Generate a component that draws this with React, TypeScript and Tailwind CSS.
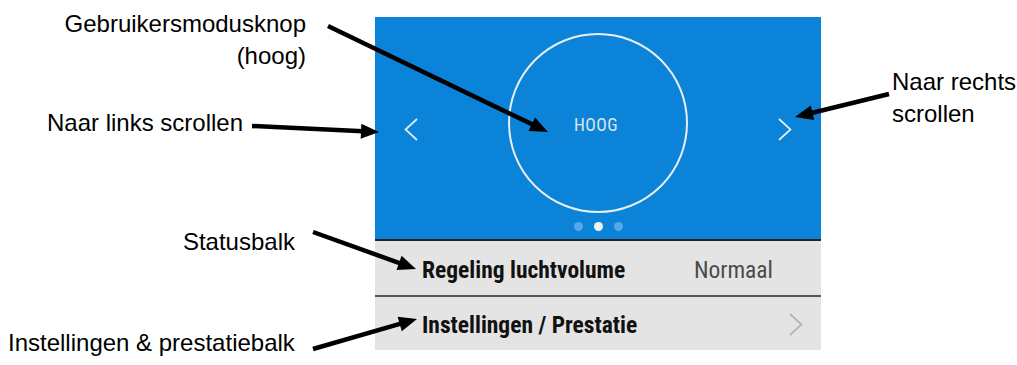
import React from 'react';

type ArrowProps = { x1: number; y1: number; x2: number; y2: number; hl?: number; hw?: number };

function Arrow({ x1, y1, x2, y2, hl = 18, hw = 15 }: ArrowProps) {
  const len = Math.hypot(x2 - x1, y2 - y1);
  const ux = (x2 - x1) / len;
  const uy = (y2 - y1) / len;
  const bx = x2 - ux * hl;
  const by = y2 - uy * hl;
  const px = -uy * (hw / 2);
  const py = ux * (hw / 2);
  return (
    <g>
      <line x1={x1} y1={y1} x2={bx + ux * 2} y2={by + uy * 2} stroke="#000" strokeWidth={4.5} />
      <polygon points={`${x2},${y2} ${bx + px},${by + py} ${bx - px},${by - py}`} fill="#000" />
    </g>
  );
}

function Chevron({ dir, className }: { dir: 'left' | 'right'; className?: string }) {
  return (
    <svg width="14" height="23" viewBox="0 0 14 23" className={className}>
      <path
        d={dir === 'left' ? 'M13 1 L1.5 11.5 L13 22' : 'M1 1 L12.5 11.5 L1 22'}
        fill="none"
        stroke="currentColor"
        strokeWidth="1.7"
      />
    </svg>
  );
}

const cond = "font-['Roboto_Condensed','Liberation_Sans_Narrow',Roboto,sans-serif] [font-stretch:condensed]";

export default function App() {
  return (
    <div className="relative flex w-[1017px] h-[365px] overflow-hidden bg-white text-black font-['Liberation_Sans',Arial,sans-serif] text-[24px] leading-[32px]">
      {/* left labels */}
      <div className="flex w-[375px] shrink-0 flex-col">
        <div className="mt-[8px] pr-[69px] text-right">
          <div>Gebruikersmodusknop</div>
          <div>(hoog)</div>
        </div>
        <div className="mt-[35px] pl-[47px]">Naar links scrollen</div>
        <div className="mt-[87px] pr-[80px] text-right">Statusbalk</div>
        <div className="mt-[69px] pl-[8px] whitespace-nowrap">Instellingen &amp; prestatiebalk</div>
      </div>

      {/* device screen */}
      <div className="flex w-[446px] shrink-0 flex-col pt-[17px]">
        <div className="flex h-[222px] flex-col items-center bg-[#0a83d8] pt-[16px]">
          <div className="flex w-full items-center justify-between px-[29px]">
            <Chevron dir="left" className="mt-[12px] text-[#e4eef7]" />
            <div className={`flex h-[180px] w-[180px] items-center justify-center rounded-full border-2 border-[#e9eef3] pt-[4px] pr-[4px] text-[17.5px] tracking-[0.5px] text-[#dde6ef] ${cond}`}>
              HOOG
            </div>
            <Chevron dir="right" className="mt-[12px] text-[#e4eef7]" />
          </div>
          <div className="mt-[9px] flex items-center gap-[11px]">
            <span className="h-[9px] w-[9px] rounded-full bg-[#56a8e8]" />
            <span className="h-[9px] w-[9px] rounded-full bg-[#f2f2f2]" />
            <span className="h-[9px] w-[9px] rounded-full bg-[#56a8e8]" />
          </div>
        </div>
        <div className="h-[2px] bg-[#222]" />
        <div className={`flex h-[54px] items-center justify-between bg-[#e4e4e4] pl-[47px] pr-[48px] pt-[3px] text-[23.5px] ${cond}`}>
          <span className="font-bold text-[#111]">Regeling luchtvolume</span>
          <span className="text-[#4a4a4a]">Normaal</span>
        </div>
        <div className="h-[2px] bg-[#555]" />
        <div className={`flex h-[53px] items-center justify-between bg-[#e4e4e4] pl-[47px] pr-[18px] pt-[2px] text-[23.5px] ${cond}`}>
          <span className="font-bold text-[#111]">Instellingen / Prestatie</span>
          <Chevron dir="right" className="text-[#b3b3b3]" />
        </div>
      </div>

      {/* right labels */}
      <div className="flex-1 pl-[71px] pt-[66px] whitespace-nowrap">
        <div>Naar rechts</div>
        <div>scrollen</div>
      </div>

      {/* annotation arrows */}
      <svg className="pointer-events-none absolute inset-0" width="1017" height="365">
        <Arrow x1={328} y1={26} x2={548} y2={132} />
        <Arrow x1={252} y1={126} x2={379} y2={132} />
        <Arrow x1={889} y1={94} x2={795} y2={117} />
        <Arrow x1={313} y1={232} x2={416} y2={269} />
        <Arrow x1={313} y1={349} x2={417} y2={319} />
      </svg>
    </div>
  );
}
